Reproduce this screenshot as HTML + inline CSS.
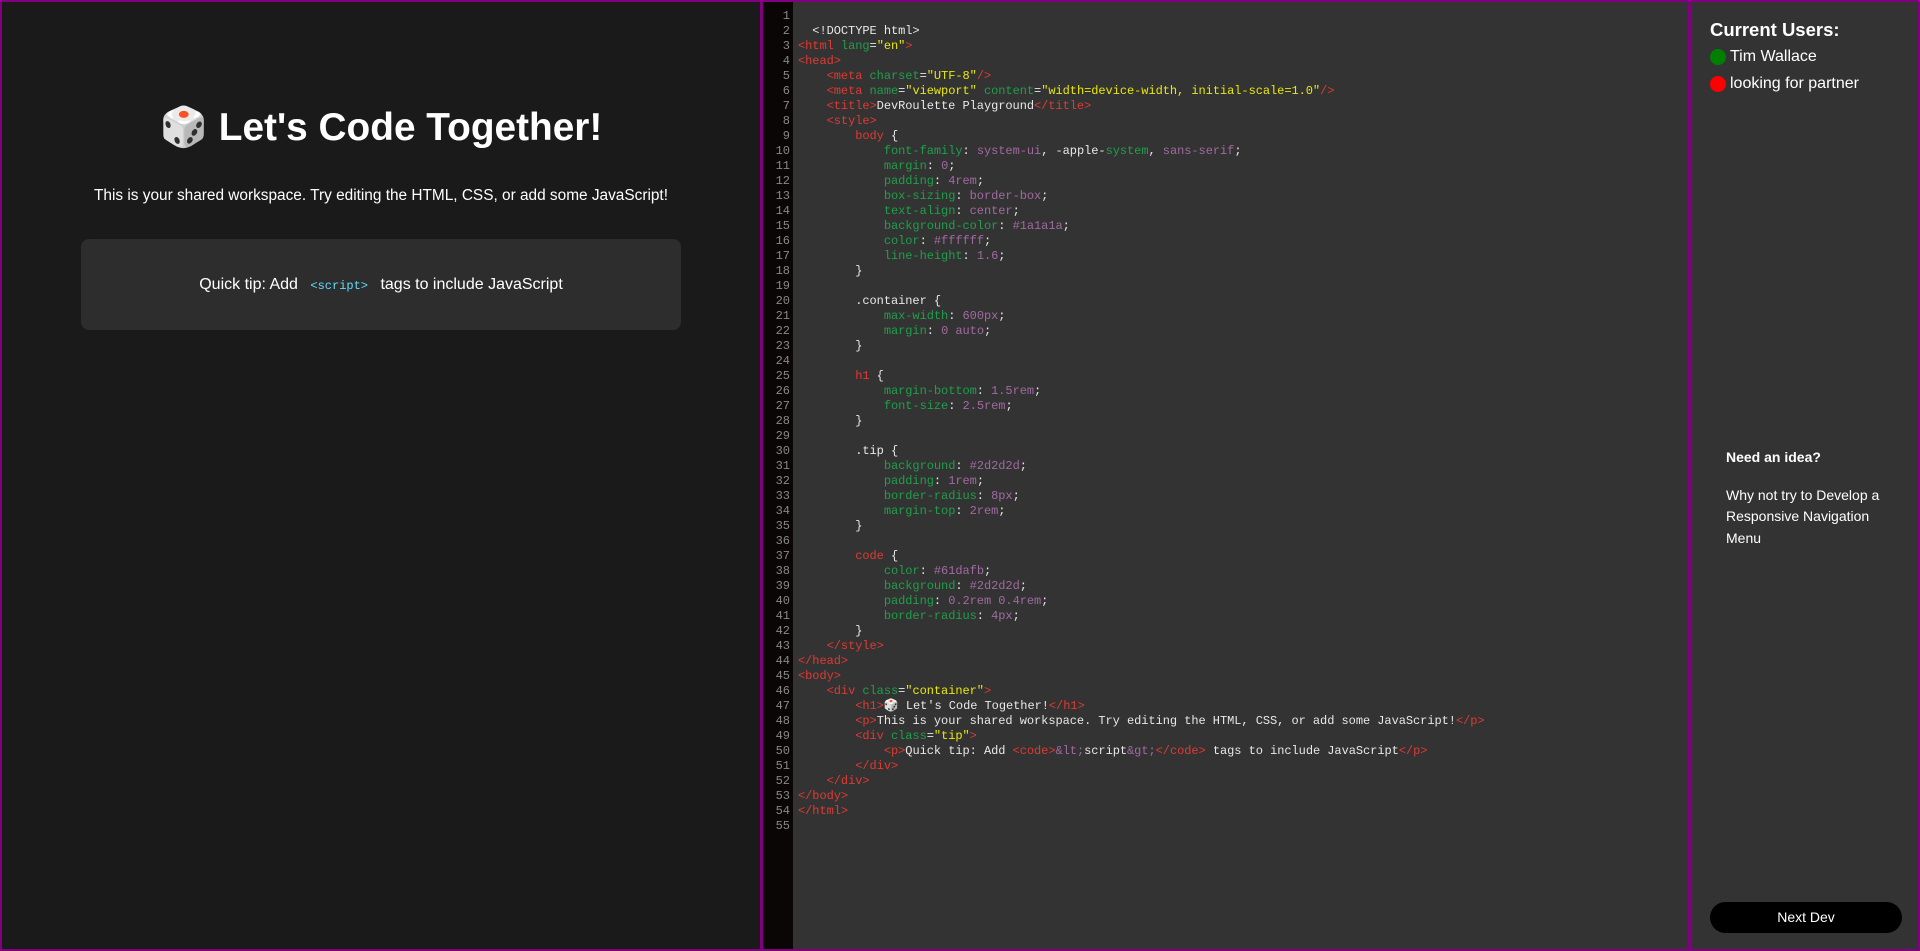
<!DOCTYPE html>
<html><head><meta charset="utf-8"><style>
*{box-sizing:border-box;margin:0;padding:0}
html,body{width:1920px;height:951px;overflow:hidden;background:#800080}
body{position:relative;font-family:"Liberation Sans",sans-serif}
#left{position:absolute;left:2px;top:2px;width:758px;height:947px;background:#1a1a1a;color:#fff;text-align:center}
#left h1{position:absolute;left:0;width:758px;top:101px;font-size:38.8px;line-height:50px;font-weight:bold}
#left p.d{position:absolute;left:0;width:758px;top:185px;font-size:15.4px}
#tip{position:absolute;left:79px;top:237px;width:600px;height:91px;background:#2d2d2d;border-radius:8px;font-size:16px;line-height:91px}
#tip code{font-family:"Liberation Mono",monospace;font-size:12px;color:#61dafb;padding:0 8px}
#gut{position:absolute;left:763px;top:2px;width:30px;height:947px;background:#0a0606;color:#888;font:12px/15px "Liberation Mono",monospace;text-align:right;padding:7px 3px 0 0}
#ed{position:absolute;left:793px;top:2px;width:895px;height:947px;background:#333;font:12px/15px "Liberation Mono",monospace;color:#e8e8e8;padding:7px 0 0 5px;white-space:pre;letter-spacing:-0.05px}
.t{color:#e03a32}.a{color:#1f9f4a}.s{color:#e8e80a}.v{color:#a06aa0}
#right{position:absolute;left:1692px;top:2px;width:226px;height:947px;background:#333;color:#fff}
#right h2{position:absolute;left:18px;top:17px;font-size:18.5px;font-weight:bold}
.u{position:absolute;left:18px;font-size:16px;display:flex;align-items:center}
.u i{display:inline-block;width:16px;height:16px;border-radius:50%;margin-right:4px}
#idea{position:absolute;left:34px;top:445px;width:180px;font-size:14px;line-height:21.5px}
#btn{position:absolute;left:18px;top:900px;width:192px;height:31px;background:#000;border-radius:16px;font-size:14px;text-align:center;line-height:31px}
</style></head><body>
<div id="left">
<h1>🎲 Let's Code Together!</h1>
<p class="d">This is your shared workspace. Try editing the HTML, CSS, or add some JavaScript!</p>
<div id="tip">Quick tip: Add <code>&lt;script&gt;</code> tags to include JavaScript</div>
</div>
<div id="gut">1<br>2<br>3<br>4<br>5<br>6<br>7<br>8<br>9<br>10<br>11<br>12<br>13<br>14<br>15<br>16<br>17<br>18<br>19<br>20<br>21<br>22<br>23<br>24<br>25<br>26<br>27<br>28<br>29<br>30<br>31<br>32<br>33<br>34<br>35<br>36<br>37<br>38<br>39<br>40<br>41<br>42<br>43<br>44<br>45<br>46<br>47<br>48<br>49<br>50<br>51<br>52<br>53<br>54<br>55</div>
<div id="ed">
  &lt;!DOCTYPE html&gt;
<span class="t">&lt;html</span> <span class="a">lang</span>=<span class="s">"en"</span><span class="t">&gt;</span>
<span class="t">&lt;head&gt;</span>
    <span class="t">&lt;meta</span> <span class="a">charset</span>=<span class="s">"UTF-8"</span><span class="t">/&gt;</span>
    <span class="t">&lt;meta</span> <span class="a">name</span>=<span class="s">"viewport"</span> <span class="a">content</span>=<span class="s">"width=device-width, initial-scale=1.0"</span><span class="t">/&gt;</span>
    <span class="t">&lt;title&gt;</span>DevRoulette Playground<span class="t">&lt;/title&gt;</span>
    <span class="t">&lt;style&gt;</span>
        <span class="t">body</span> {
            <span class="a">font-family</span>: <span class="v">system-ui</span>, -apple-<span class="a">system</span>, <span class="v">sans-serif</span>;
            <span class="a">margin</span>: <span class="v">0</span>;
            <span class="a">padding</span>: <span class="v">4rem</span>;
            <span class="a">box-sizing</span>: <span class="v">border-box</span>;
            <span class="a">text-align</span>: <span class="v">center</span>;
            <span class="a">background-color</span>: <span class="v">#1a1a1a</span>;
            <span class="a">color</span>: <span class="v">#ffffff</span>;
            <span class="a">line-height</span>: <span class="v">1.6</span>;
        }

        .container {
            <span class="a">max-width</span>: <span class="v">600px</span>;
            <span class="a">margin</span>: <span class="v">0 auto</span>;
        }

        <span class="t">h1</span> {
            <span class="a">margin-bottom</span>: <span class="v">1.5rem</span>;
            <span class="a">font-size</span>: <span class="v">2.5rem</span>;
        }

        .tip {
            <span class="a">background</span>: <span class="v">#2d2d2d</span>;
            <span class="a">padding</span>: <span class="v">1rem</span>;
            <span class="a">border-radius</span>: <span class="v">8px</span>;
            <span class="a">margin-top</span>: <span class="v">2rem</span>;
        }

        <span class="t">code</span> {
            <span class="a">color</span>: <span class="v">#61dafb</span>;
            <span class="a">background</span>: <span class="v">#2d2d2d</span>;
            <span class="a">padding</span>: <span class="v">0.2rem 0.4rem</span>;
            <span class="a">border-radius</span>: <span class="v">4px</span>;
        }
    <span class="t">&lt;/style&gt;</span>
<span class="t">&lt;/head&gt;</span>
<span class="t">&lt;body&gt;</span>
    <span class="t">&lt;div</span> <span class="a">class</span>=<span class="s">"container"</span><span class="t">&gt;</span>
        <span class="t">&lt;h1&gt;</span>🎲 Let's Code Together!<span class="t">&lt;/h1&gt;</span>
        <span class="t">&lt;p&gt;</span>This is your shared workspace. Try editing the HTML, CSS, or add some JavaScript!<span class="t">&lt;/p&gt;</span>
        <span class="t">&lt;div</span> <span class="a">class</span>=<span class="s">"tip"</span><span class="t">&gt;</span>
            <span class="t">&lt;p&gt;</span>Quick tip: Add <span class="t">&lt;code&gt;</span><span class="v">&amp;lt;</span>script<span class="v">&amp;gt;</span><span class="t">&lt;/code&gt;</span> tags to include JavaScript<span class="t">&lt;/p&gt;</span>
        <span class="t">&lt;/div&gt;</span>
    <span class="t">&lt;/div&gt;</span>
<span class="t">&lt;/body&gt;</span>
<span class="t">&lt;/html&gt;</span>
</div>
<div id="right">
<h2>Current Users:</h2>
<div class="u" style="top:46px"><i style="background:#008000"></i>Tim Wallace</div>
<div class="u" style="top:73px"><i style="background:#ff0000"></i>looking for partner</div>
<div id="idea"><b>Need an idea?</b><br><div style="height:16px"></div>Why not try to Develop a Responsive Navigation Menu</div>
<div id="btn">Next Dev</div>
</div>
</body></html>
